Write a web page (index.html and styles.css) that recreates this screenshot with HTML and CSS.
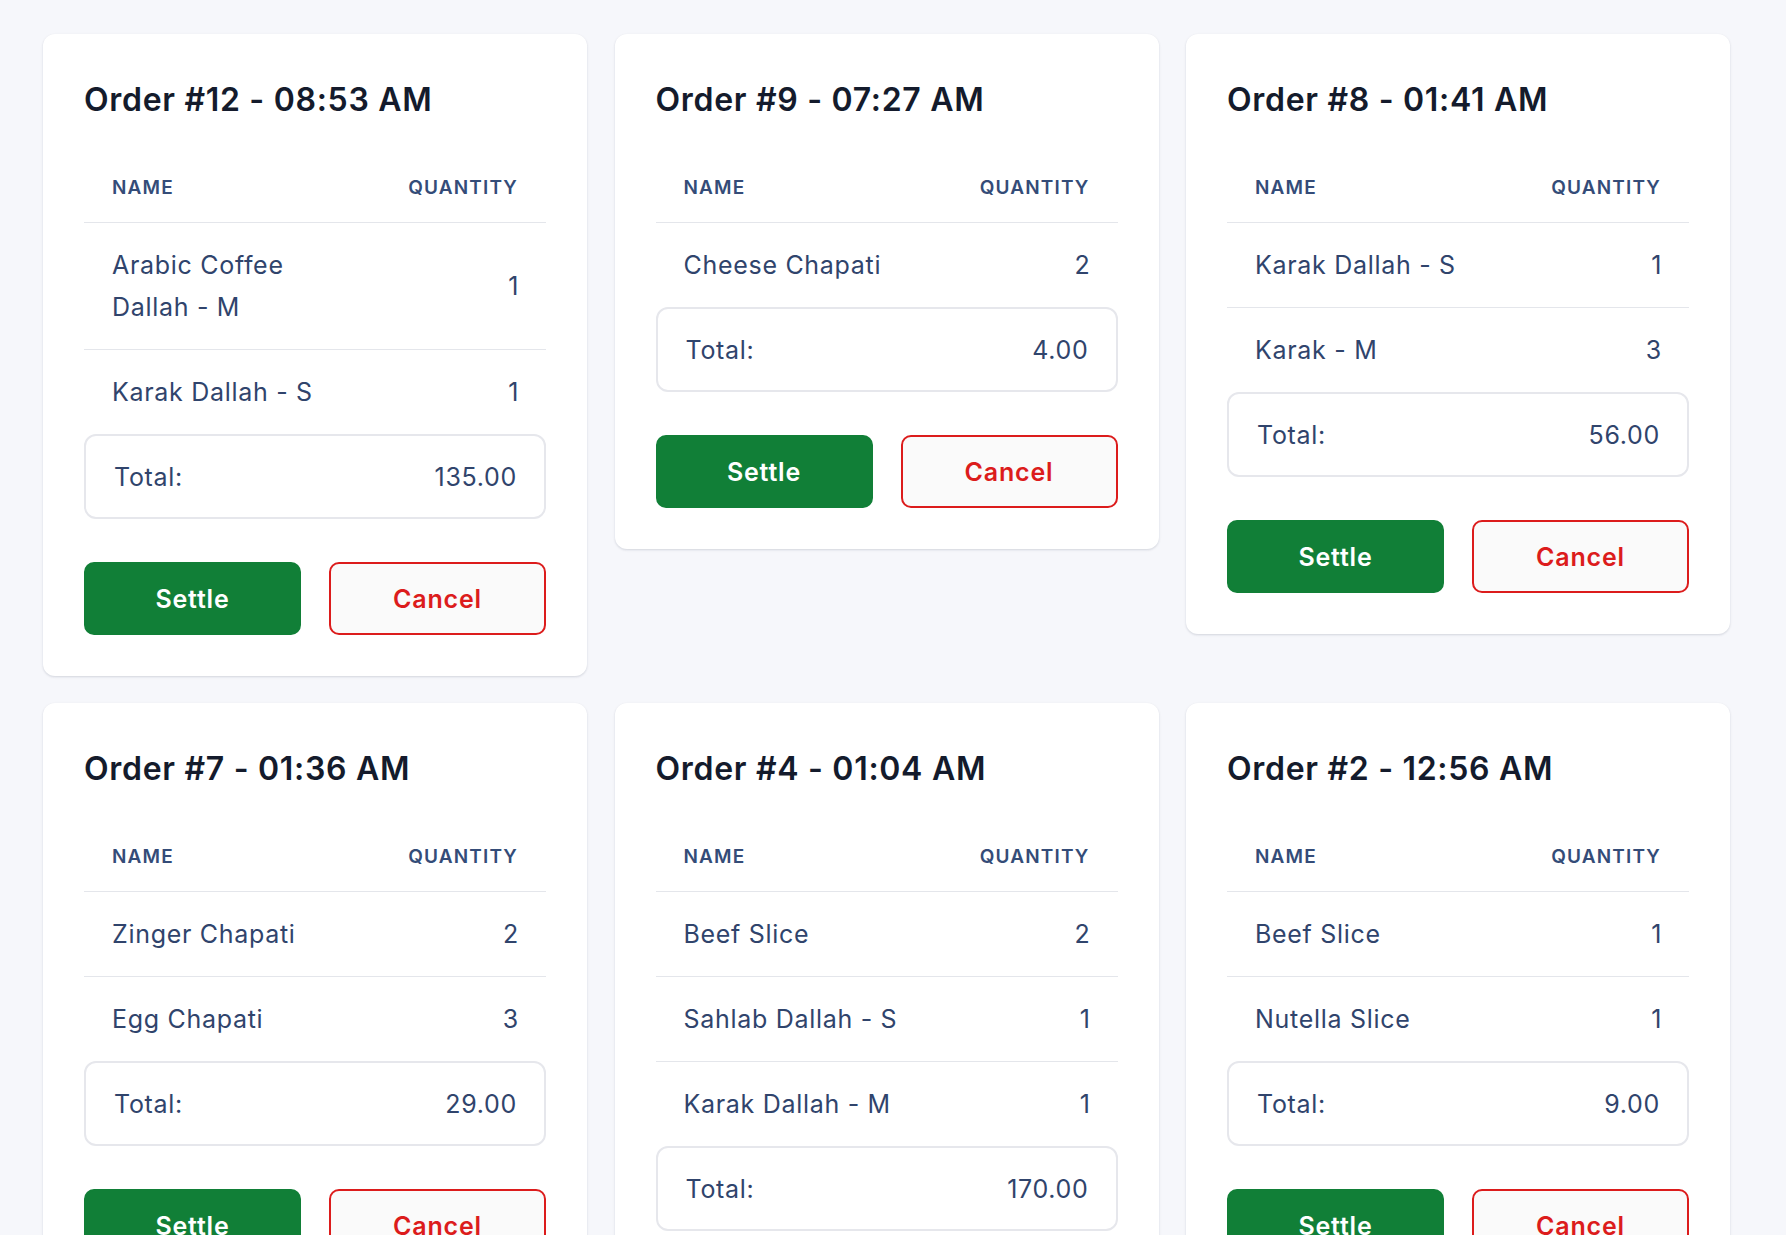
FILE: index.html
```html
<!DOCTYPE html>
<html lang="en">
<head>
<meta charset="utf-8">
<title>Orders</title>
<link rel="stylesheet" href="styles.css">
</head>
<body>
<main class="orders">
  <section class="card">
    <h2 class="card-title">Order #12 - 08:53 AM</h2>
    <table class="items">
      <thead><tr><th class="col-name">Name</th><th class="col-qty">Quantity</th></tr></thead>
      <tbody>
        <tr><td class="col-name">Arabic Coffee Dallah - M</td><td class="col-qty">1</td></tr>
        <tr><td class="col-name">Karak Dallah - S</td><td class="col-qty">1</td></tr>
      </tbody>
    </table>
    <div class="total"><span>Total:</span><span>135.00</span></div>
    <div class="actions"><button class="btn btn-settle">Settle</button><button class="btn btn-cancel">Cancel</button></div>
  </section>

  <section class="card">
    <h2 class="card-title">Order #9 - 07:27 AM</h2>
    <table class="items">
      <thead><tr><th class="col-name">Name</th><th class="col-qty">Quantity</th></tr></thead>
      <tbody>
        <tr><td class="col-name">Cheese Chapati</td><td class="col-qty">2</td></tr>
      </tbody>
    </table>
    <div class="total"><span>Total:</span><span>4.00</span></div>
    <div class="actions"><button class="btn btn-settle">Settle</button><button class="btn btn-cancel">Cancel</button></div>
  </section>

  <section class="card">
    <h2 class="card-title">Order #8 - 01:41 AM</h2>
    <table class="items">
      <thead><tr><th class="col-name">Name</th><th class="col-qty">Quantity</th></tr></thead>
      <tbody>
        <tr><td class="col-name">Karak Dallah - S</td><td class="col-qty">1</td></tr>
        <tr><td class="col-name">Karak - M</td><td class="col-qty">3</td></tr>
      </tbody>
    </table>
    <div class="total"><span>Total:</span><span>56.00</span></div>
    <div class="actions"><button class="btn btn-settle">Settle</button><button class="btn btn-cancel">Cancel</button></div>
  </section>

  <section class="card">
    <h2 class="card-title">Order #7 - 01:36 AM</h2>
    <table class="items">
      <thead><tr><th class="col-name">Name</th><th class="col-qty">Quantity</th></tr></thead>
      <tbody>
        <tr><td class="col-name">Zinger Chapati</td><td class="col-qty">2</td></tr>
        <tr><td class="col-name">Egg Chapati</td><td class="col-qty">3</td></tr>
      </tbody>
    </table>
    <div class="total"><span>Total:</span><span>29.00</span></div>
    <div class="actions"><button class="btn btn-settle">Settle</button><button class="btn btn-cancel">Cancel</button></div>
  </section>

  <section class="card">
    <h2 class="card-title">Order #4 - 01:04 AM</h2>
    <table class="items">
      <thead><tr><th class="col-name">Name</th><th class="col-qty">Quantity</th></tr></thead>
      <tbody>
        <tr><td class="col-name">Beef Slice</td><td class="col-qty">2</td></tr>
        <tr><td class="col-name">Sahlab Dallah - S</td><td class="col-qty">1</td></tr>
        <tr><td class="col-name">Karak Dallah - M</td><td class="col-qty">1</td></tr>
      </tbody>
    </table>
    <div class="total"><span>Total:</span><span>170.00</span></div>
    <div class="actions"><button class="btn btn-settle">Settle</button><button class="btn btn-cancel">Cancel</button></div>
  </section>

  <section class="card">
    <h2 class="card-title">Order #2 - 12:56 AM</h2>
    <table class="items">
      <thead><tr><th class="col-name">Name</th><th class="col-qty">Quantity</th></tr></thead>
      <tbody>
        <tr><td class="col-name">Beef Slice</td><td class="col-qty">1</td></tr>
        <tr><td class="col-name">Nutella Slice</td><td class="col-qty">1</td></tr>
      </tbody>
    </table>
    <div class="total"><span>Total:</span><span>9.00</span></div>
    <div class="actions"><button class="btn btn-settle">Settle</button><button class="btn btn-cancel">Cancel</button></div>
  </section>
</main>
</body>
</html>
```

FILE: styles.css
```css
html, body {
  margin: 0;
  padding: 0;
  overflow: hidden;
  background: #f6f7fb;
  font-family: Inter, "Noto Sans", "Liberation Sans", sans-serif;
  color: #30446c;
}

.orders {
  display: grid;
  grid-template-columns: repeat(3, 544px);
  column-gap: 27.5px;
  row-gap: 27px;
  align-items: start;
  padding: 34px 0 0 43px;
}

.card {
  background: #ffffff;
  border-radius: 12px;
  padding: 41px;
  box-shadow: 0 1px 3px rgba(20, 30, 60, 0.10), 0 1px 2px rgba(20, 30, 60, 0.06);
}

.card-title {
  margin: 0 0 28px;
  font-size: 32px;
  line-height: 50px;
  font-weight: 600;
  color: #141b2c;
  letter-spacing: 0.7px;
}

.items {
  width: 100%;
  border-collapse: collapse;
}

.items th {
  padding: 21px 28px 20px;
  font-size: 19px;
  line-height: 28px;
  font-weight: 600;
  text-transform: uppercase;
  letter-spacing: 0.06em;
  color: #344c78;
  border-bottom: 1px solid #e4e6eb;
}

.items td {
  padding: 21px 28px;
  font-size: 25px;
  line-height: 42px;
  letter-spacing: 0.7px;
  color: #30446c;
  vertical-align: middle;
}

.items td.col-qty {
  padding-right: 27px;
}

.items tbody tr + tr td {
  border-top: 1px solid #e4e6eb;
}

.col-name {
  text-align: left;
}

.col-qty {
  text-align: right;
  white-space: nowrap;
}

.total {
  display: flex;
  justify-content: space-between;
  align-items: center;
  padding: 19.5px 27px 19.5px 28px;
  border: 2px solid #e6e7ec;
  border-radius: 12px;
  font-size: 25px;
  line-height: 42px;
  letter-spacing: 0.7px;
  color: #30446c;
}

.actions {
  display: flex;
  gap: 28px;
  margin-top: 43px;
}

.btn {
  flex: 1;
  height: 73px;
  border-radius: 10px;
  font-family: inherit;
  font-size: 25px;
  font-weight: 600;
  letter-spacing: 0.8px;
  cursor: pointer;
}

.btn-settle {
  background: #117f37;
  border: 2px solid #117f37;
  color: #ffffff;
}

.btn-cancel {
  background: #fafafa;
  border: 2px solid #dc1c1c;
  color: #dc1c1c;
}
```
